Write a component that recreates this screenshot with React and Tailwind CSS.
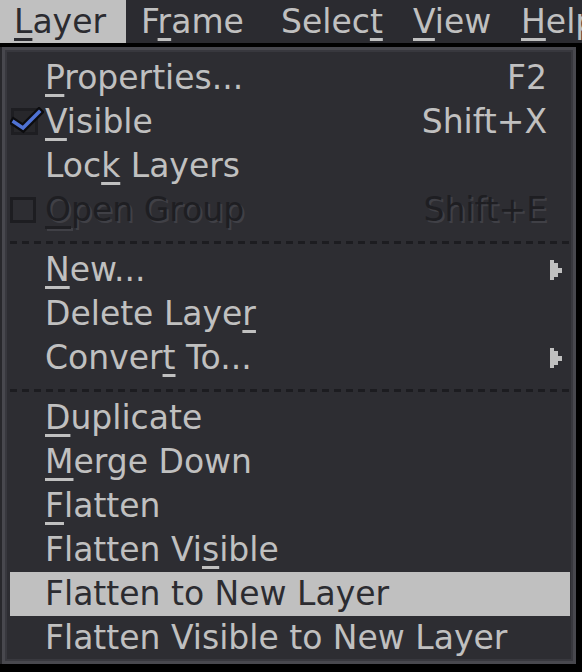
import React from "react";

const FONT = "font-['DejaVu_Sans',sans-serif]";

function Label({ text, u, className = "" }) {
  if (u === undefined || u === null) return <span className={className}>{text}</span>;
  return (
    <span className={className}>
      {text.slice(0, u)}
      <span className="underline decoration-[3px] underline-offset-[5px] [text-decoration-skip-ink:none]">
        {text[u]}
      </span>
      {text.slice(u + 1)}
    </span>
  );
}

function Check() {
  return (
    <svg width="34" height="30" viewBox="0 0 34 30" className="block">
      <rect x="2.5" y="2.5" width="24" height="24" fill="#27272b" stroke="#1e1e22" strokeWidth="3" />
      <polyline points="4,15 13,21 29,5" fill="none" stroke="#0c0c0e" strokeWidth="8" strokeLinecap="square" strokeLinejoin="miter" />
      <polyline points="4,15 13,21 29,5" fill="none" stroke="#4f72d4" strokeWidth="3.5" strokeLinecap="square" strokeLinejoin="miter" />
    </svg>
  );
}

function Box() {
  return <div className="w-[26px] h-[26px] border-[3px] border-[#1d1d21]" />;
}

function Arrow() {
  return (
    <svg width="12" height="20" viewBox="0 0 12 20" className="block">
      <polygon points="0,0 4,0 4,3 8,3 8,8 12,8 12,13 8,13 8,17 4,17 4,20 0,20" fill="#c0c0c0" />
    </svg>
  );
}

const items = [
  { label: "Properties...", u: 0, sc: "F2" },
  { label: "Visible", u: 0, sc: "Shift+X", check: true },
  { label: "Lock Layers", u: 3 },
  { label: "Open Group", u: 0, sc: "Shift+E", disabled: true, box: true },
  { sep: true },
  { label: "New...", u: 0, arrow: true },
  { label: "Delete Layer", u: 11 },
  { label: "Convert To...", u: 6, arrow: true },
  { sep: true },
  { label: "Duplicate", u: 0 },
  { label: "Merge Down", u: 0 },
  { label: "Flatten", u: 0 },
  { label: "Flatten Visible", u: 10 },
  { label: "Flatten to New Layer", hl: true },
  { label: "Flatten Visible to New Layer" },
];

const menubar = [
  { t: "Layer", u: 0, w: "w-[126px]", pl: "pl-[14px]", active: true },
  { t: "Frame", u: 1, w: "w-[140px]", pl: "pl-[15px]" },
  { t: "Select", u: 5, w: "w-[132px]", pl: "pl-[15px]" },
  { t: "View", u: 0, w: "w-[108px]", pl: "pl-[15px]" },
  { t: "Help", u: 0, w: "w-[90px]", pl: "pl-[15px]" },
];

export default function App() {
  return (
    <div className={`w-[582px] h-[672px] bg-black overflow-hidden ${FONT} text-[33px]`}>
      {/* menubar */}
      <div className="h-[43px] bg-[#2b2b30] flex overflow-hidden whitespace-nowrap">
        {menubar.map((m) => (
          <div
            key={m.t}
            className={`${m.w} ${m.pl} shrink-0 h-[43px] leading-[43px] ${
              m.active ? "bg-[#c0c0c0] text-[#2b2b30]" : "text-[#c0c0c0]"
            }`}
          >
            <Label text={m.t} u={m.u} />
          </div>
        ))}
      </div>
      <div className="h-[4px] bg-black" />
      {/* menu */}
      <div className="flex">
        <div className="w-[2px] h-[617px] bg-[#28282c]" />
        <div className="w-[574px] h-[617px] border-[3px] border-[#48484e] bg-[#2d2d32]">
          <div className="h-full border-2 border-[#38383e] pl-[3px] pr-[1px] pt-[4px]">
            {items.map((it, i) =>
              it.sep ? (
                <div key={i} className="h-[16px] pt-[9px]">
                  <div className="h-[3px] bg-[repeating-linear-gradient(90deg,#1c1c20_0_7px,transparent_7px_12px)]" />
                </div>
              ) : (
                <div
                  key={i}
                  className={`h-[44px] leading-[44px] flex items-center whitespace-nowrap ${
                    it.hl ? "bg-[#c0c0c0] text-[#2c2c31]" : it.disabled ? "text-[#1e1e22]" : "text-[#c0c0c0]"
                  }`}
                >
                  <div className="w-[35px] h-[44px] flex items-center shrink-0">
                    {it.check && <Check />}
                    {it.box && <Box />}
                  </div>
                  <Label
                    text={it.label}
                    u={it.u}
                    className={`flex-1 ${it.disabled ? "[text-shadow:2px_2px_0_#404046]" : ""}`}
                  />
                  {it.sc && (
                    <span className={it.disabled ? "[text-shadow:2px_2px_0_#404046]" : ""}>{it.sc}</span>
                  )}
                  <div className="w-[23px] h-[44px] shrink-0 flex items-center pl-[3px]">
                    {it.arrow && <Arrow />}
                  </div>
                </div>
              )
            )}
          </div>
        </div>
      </div>
    </div>
  );
}
